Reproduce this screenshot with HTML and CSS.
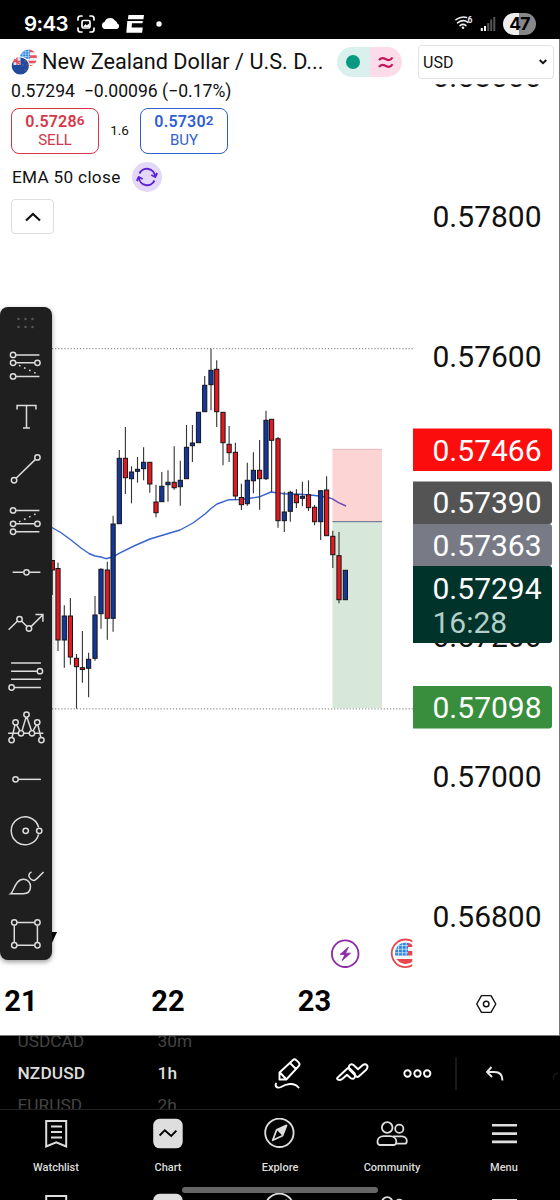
FILE: index.html
```html
<!DOCTYPE html>
<html lang="en">
<head>
  <meta charset="UTF-8">
  <meta name="viewport" content="width=device-width, initial-scale=1.0">
  <title>NZDUSD Chart</title>
  <link rel="stylesheet" href="styles.css">
</head>
<body>
  <!-- Shared icons -->
  <svg class="defs" width="0" height="0">
    <symbol id="iconWatchlist" viewBox="0 0 32 32">
      <path d="M6.2 2.9h20v25.6l-10-4.2-10 4.2z" fill="none" stroke="#dedede" stroke-width="2"/>
      <path d="M11 8.6h11M11 14h11M11 19.5h11" stroke="#dedede" stroke-width="2"/>
    </symbol>
    <symbol id="iconChart" viewBox="0 0 32 32">
      <rect x="1.2" y="0.8" width="29.500" height="29.500" rx="6.5" fill="#dedede"/>
      <path d="M7.600 17.500l5.200-5.300 6.400 5.800 5.200-5.400" fill="none" stroke="#000" stroke-width="1.9"/>
    </symbol>
    <symbol id="iconExplore" viewBox="0 0 32 32">
      <circle cx="15.4" cy="14.800" r="14.2" fill="none" stroke="#dedede" stroke-width="1.8"/>
      <path d="M22.5 7.4l-4 10.4-9.8 4.4 4-10.4z" fill="none" stroke="#dedede" stroke-width="1.8" stroke-linejoin="round"/>
      <path d="M22.5 7.4l-4 10.4-5.8-6z" fill="#dedede"/>
    </symbol>
    <symbol id="iconCommunity" viewBox="0 0 32 32">
      <g fill="none" stroke="#dedede" stroke-width="1.8" stroke-linejoin="round">
        <circle cx="11.2" cy="9.500" r="5.3"/>
        <circle cx="23.3" cy="10.8" r="4.1"/>
        <path d="M1.500 23.600c0-3.300 2.800-5.400 6.300-5.400h6.200c3.500 0 6.300 2.100 6.300 5.400 0 2-.8 3.400-2.300 3.400H3.800c-1.500 0-2.300-1.300-2.300-3.400z"/>
        <path d="M17 18.300h8.300c3 0 5.500 1.700 5.500 4.400 0 1.900-.7 3-2 3h-8.500"/>
      </g>
    </symbol>
    <symbol id="iconMenu" viewBox="0 0 32 32">
      <path d="M4 7.300h25M4 15.600h25M4 23.900h25" stroke="#dedede" stroke-width="2.600"/>
    </symbol>
    <symbol id="flagUs" viewBox="0 0 24 24">
      <clipPath id="usClip"><circle cx="12" cy="12" r="12"/></clipPath>
      <g clip-path="url(#usClip)">
        <path fill="#f4f4f6" d="M0 0h24v24H0z"/>
        <path fill="#e8565b" d="M12 0h12v4H12zM12 8h12v4H12zM0 16h24v3.500H0zM0 22h24v2H0z"/>
        <path fill="#2f86de" d="M0 0h14v13H0z"/>
        <path d="M4 0v13M8 0v13M12 0v13M0 3h14M0 6.500h14M0 10h14" stroke="#bfe0fa" stroke-width=".9"/>
      </g>
    </symbol>
    <symbol id="flagUsBig" viewBox="0 0 24 24">
      <clipPath id="usBigClip"><circle cx="12" cy="12" r="12"/></clipPath>
      <g clip-path="url(#usBigClip)">
        <path fill="#f7f7f9" d="M0 0h24v24H0z"/>
        <path fill="#e8464c" d="M14 0h10v5H14zM14 9.500h10v5H14zM0 18.500h24V24H0z"/>
        <path fill="#2b83dd" d="M0 0h14.500v14.500H0z"/>
        <path d="M4 0v14.500M8.200 0v14.500M12.400 0v14.500M0 3.500h14.500M0 7.500h14.500M0 11.500h14.500" stroke="#d5eafc" stroke-width=".9"/>
      </g>
    </symbol>
  </svg>

  <div class="phone">
    <header class="status-bar">
      <span class="clock">9:43</span>
      <svg class="status-left" width="92" height="22" viewBox="76 13 92 22">
        <g fill="none" stroke="#fff" stroke-width="1.700" stroke-linecap="round">
          <path d="M78 20v-1.500q0-2.500 2.500-2.500H82M90 16h1.500q2.500 0 2.500 2.500V20M94 28v1.500q0 2.500-2.500 2.500H90M82 32h-1.500q-2.500 0-2.500-2.500V28"/>
          <rect x="82" y="20.500" width="8" height="7.500" rx="1.500"/>
        </g>
        <path d="M83 27l2.500-3 1.500 1.500 1.500-2 1.500 3.500z" fill="#fff"/>
        <path d="M105 29a3.600 3.600 0 0 1-.5-7 6 6 0 0 1 10.500-1.500 4.500 4.500 0 0 1 2.300 3 2.900 2.900 0 0 1-.3 5.500z" fill="#fff"/>
        <path d="M128.500 15h15.500l-.6 4.300h-15.500zM127.300 21h4.900l-.6 6.500h11.200l-.7 5.300h-15.800zM132 21h10.800l-.3 2.300H132z" fill="#fff"/>
        <circle cx="159" cy="24" r="2.700" fill="#fff"/>
      </svg>
      <svg class="status-right" width="44" height="20" viewBox="454 14 44 20">
        <g fill="none" stroke="#eee" stroke-width="1.600" stroke-linecap="round">
          <path d="M456 19.700q5.500-4 10.500-2.200M457.500 22.800q5.500-4 10.500-.5M460 25.600q3-2.400 6 0"/>
        </g>
        <circle cx="463" cy="27.700" r="1.300" fill="#eee"/>
        <text x="467.500" y="22.500" class="wifi-gen">6</text>
        <path d="M481.800 31v-3M485 31v-5" stroke="#fff" stroke-width="2"/>
        <path d="M488.200 31v-8M491.200 31V19.500M494.300 31V17" stroke="#555" stroke-width="2"/>
      </svg>
      <span class="battery">47</span>
    </header>

    <main class="chart">
      <svg class="plot" width="560" height="997" viewBox="0 39 560 997">
        <rect x="332.500" y="449" width="49.500" height="72.500" fill="#fcd4d3"/>
        <rect x="332.500" y="521.500" width="49.500" height="186.500" fill="#d7e7d9"/>
        <path d="M332.500 449.300H382" stroke="#e3b5b4" stroke-width=".8"/>
        <path d="M332.500 521.600H382" stroke="#77809a" stroke-width="1.200"/>
        <path d="M52 348.700H413M52 708.900H413" stroke="#777" stroke-width="1" stroke-dasharray="1.200 1.900"/>
        <path id="ema" d="" fill="none" stroke="#3564cf" stroke-width="1.400" stroke-linejoin="round"/>
        <g id="candles"></g>
        <path d="M332 498.700l6.500 4 7.500 3.300" fill="none" stroke="#6f45b5" stroke-width="1.400"/>
        <path d="M50 932h7l-6 13z" fill="#000"/>

        <!-- Event markers -->
        <circle cx="345.200" cy="953.700" r="13.300" fill="#fff" stroke="#8d2aa6" stroke-width="1.800"/>
        <path d="M348.500 947l-8.500 7.500h5l-3 6.200 8.500-7.500h-5z" fill="#8d2aa6" stroke="#8d2aa6" stroke-width=".8" stroke-linejoin="round"/>
        <svg x="380" y="930" width="32.300" height="46" viewBox="380 930 32.300 46">
          <circle cx="405.500" cy="953.300" r="13.800" fill="#fff" stroke="#e5484f" stroke-width="1.800"/>
          <use href="#flagUsBig" x="395" y="942.500" width="21.500" height="21.500"/>
        </svg>

        <!-- Price axis -->
        <g class="ticks">
          <text x="432.500" y="86.500">0.58000</text>
          <text x="432.500" y="226.700">0.57800</text>
          <text x="432.500" y="366.700">0.57600</text>
          <text x="432.500" y="646.700">0.57200</text>
          <text x="432.500" y="786.700">0.57000</text>
          <text x="432.500" y="926.700">0.56800</text>
        </g>
        <path d="M414 60h140v24.300H414z" fill="#fff"/>
        <g class="tags">
          <path d="M413 428.500h136q3 0 3 3v36.500q0 3-3 3H413z" fill="#fb0d0e"/>
          <path d="M413 481.500h136q3 0 3 3v36.500q0 3-3 3H413z" fill="#545454"/>
          <path d="M413 524h136q3 0 3 3v36q0 3-3 3H413z" fill="#787b86"/>
          <path d="M413 566h136q3 0 3 3v71q0 3-3 3H413z" fill="#00332a"/>
          <path d="M413 686h136q3 0 3 3v36.500q0 3-3 3H413z" fill="#388e3c"/>
          <text x="432.500" y="460.700">0.57466</text>
          <text x="432.500" y="513.300">0.57390</text>
          <text x="432.500" y="555.700">0.57363</text>
          <text x="432.500" y="598.500">0.57294</text>
          <text x="432.500" y="633.200" class="countdown">16:28</text>
          <text x="432.500" y="717.800">0.57098</text>
        </g>

        <!-- Time axis -->
        <g class="days">
          <text x="21" y="1010.500">21</text>
          <text x="168" y="1010.500">22</text>
          <text x="314.500" y="1010.500">23</text>
        </g>
        <path d="M481.500 995.600h9.500l4.800 8.400-4.800 8.400h-9.500l-4.800-8.400z" fill="none" stroke="#111" stroke-width="1.400" stroke-linejoin="round"/>
        <circle cx="486.200" cy="1004" r="2.800" fill="none" stroke="#111" stroke-width="1.400"/>
        <path d="M559.500 39v997" stroke="#777" stroke-width="1"/>
      </svg>

      <section class="legend">
        <div class="symbol-row">
          <svg class="pair" width="26" height="26" viewBox="0 0 26 26">
            <use href="#flagUs" x="9" y="0.500" width="17" height="17"/>
            <circle cx="9.300" cy="17" r="9.500" fill="#fff"/>
            <circle cx="9.300" cy="17" r="8.600" fill="#1f4b9c"/>
            <path d="M2.500 12l4-3.600h3v7.500h-7z" fill="#dfe4f0"/>
            <path d="M6 8.500V16M2 12.500h7.500M3 10l6 5.500" stroke="#dd4b55" stroke-width="1.300"/>
            <path d="M13.500 12h1M11.500 16h1M15.500 16h1M13.500 21h1" stroke="#e05560" stroke-width="1.200"/>
          </svg>
          <h1>New Zealand Dollar / U.S. D...</h1>
          <div class="market">
            <span class="market-open"><i></i></span>
            <span class="market-delay">
              <svg width="18" height="14" viewBox="0 0 18 14">
                <path d="M2 5.200c2-3.200 4.500-2.400 7-1s4.700 1.300 6.500-1.700M2 12c2-3.200 4.500-2.400 7-1s4.700 1.300 6.500-1.700" fill="none" stroke="#c2185b" stroke-width="2.200"/>
              </svg>
            </span>
          </div>
        </div>
        <div class="change">0.57294&nbsp; −0.00096 (−0.17%)</div>
        <div class="trade">
          <button class="quote sell"><b>0.5728<span>6</span></b>SELL</button>
          <span class="spread">1.6</span>
          <button class="quote buy"><b>0.5730<span>2</span></b>BUY</button>
        </div>
        <div class="indicator">
          EMA 50 close
          <span class="refresh">
            <svg width="22" height="22" viewBox="0 0 22 22">
              <g fill="none" stroke="#5b22d6" stroke-width="1.900">
                <path d="M3.500 7.500a8.200 8.200 0 0 1 15.600 3M18.500 14.500a8.200 8.200 0 0 1-15.600-3"/>
                <path d="M15.300 9l4 2 1.800-4M6.700 13l-4-2-1.800 4"/>
              </g>
            </svg>
          </span>
        </div>
        <button class="collapse">
          <svg width="18" height="10" viewBox="0 0 18 10"><path d="M2 8.500l7-6.500 7 6.500" fill="none" stroke="#111" stroke-width="2.200"/></svg>
        </button>
      </section>

      <div class="currency">
        USD
        <svg width="8" height="6" viewBox="0 0 8 6"><path d="M.7 1l3.300 3.200L7.300 1" fill="none" stroke="#111" stroke-width="1.800"/></svg>
      </div>

      <!-- Drawing tools -->
      <aside class="tools">
        <svg class="grip" viewBox="0 0 52 24">
          <g fill="#555"><circle cx="18.500" cy="8" r="1.300"/><circle cx="25.500" cy="8" r="1.300"/><circle cx="32.500" cy="8" r="1.300"/><circle cx="18.500" cy="16" r="1.300"/><circle cx="25.500" cy="16" r="1.300"/><circle cx="32.500" cy="16" r="1.300"/></g>
        </svg>
        <svg class="tool" viewBox="0 0 52 52">
          <path d="M16 15h23.500M16 23h18.500M16 36.600h23.500"/><path class="dots" d="M19 25.500l19 9"/>
          <circle cx="13" cy="15" r="2.700"/><circle cx="13" cy="23" r="2.700"/><circle cx="37.500" cy="23" r="2.700"/><circle cx="13" cy="36.600" r="2.700"/>
        </svg>
        <svg class="tool" viewBox="0 0 52 52"><path d="M17 18.500v-4h19v4M26.500 14.500v23M23 37.300h7"/></svg>
        <svg class="tool" viewBox="0 0 52 52"><path d="M16 35.500l19.500-19"/><circle cx="14" cy="37.500" r="2.700"/><circle cx="37.500" cy="14.500" r="2.700"/></svg>
        <svg class="tool" viewBox="0 0 52 52">
          <path d="M16 15.500h23.500M16 29h18.500M16 37h23.500"/><path class="dots" d="M19 27l19-9"/>
          <circle cx="13" cy="15.500" r="2.700"/><circle cx="13" cy="29" r="2.700"/><circle cx="37.500" cy="29" r="2.700"/><circle cx="13" cy="37" r="2.700"/>
        </svg>
        <svg class="tool" viewBox="0 0 52 52"><path d="M12.500 26.500h11M29.500 26.500h11"/><circle cx="26.500" cy="26.500" r="2.700"/></svg>
        <svg class="tool" viewBox="0 0 52 52"><path d="M8.500 32l9-8.800M21.500 23.200l5.500 5.500M31 28.800l11.500-11.500M35.500 16.500h7.500v7.500"/><circle cx="19.500" cy="21.300" r="2.700"/><circle cx="29" cy="30.700" r="2.700"/></svg>
        <svg class="tool" viewBox="0 0 52 52"><path d="M11 13h30M11 21.300h26M11 29.500h30M14.500 37.700H41"/><circle cx="40" cy="21.300" r="2.700"/><circle cx="11.500" cy="37.700" r="2.700"/></svg>
        <svg class="tool" viewBox="0 0 52 52">
          <path d="M8 32.500h10M24 32.500h5M35 32.500h8.500M12 36.500l3-13M16.500 24l3.500 6M22 30l4-13.500M27 16.500l4.500 13.500M33 30l3.500-6M38 24l3 13"/>
          <circle cx="26.500" cy="13.700" r="2.700"/><circle cx="15.500" cy="21.500" r="2.700"/><circle cx="37.300" cy="21.500" r="2.700"/><circle cx="21" cy="32.500" r="2.700"/><circle cx="32" cy="32.500" r="2.700"/><circle cx="11.500" cy="39.300" r="2.700"/><circle cx="41.500" cy="39.300" r="2.700"/>
        </svg>
        <svg class="tool" viewBox="0 0 52 52"><path d="M18.500 26.500H41"/><circle cx="15.500" cy="26.500" r="2.700"/></svg>
        <svg class="tool" viewBox="0 0 52 52"><path d="M38.700 22.500a14 14 0 1 0 0 7"/><circle cx="25.700" cy="26" r="2.700"/><circle cx="39.300" cy="26" r="2.700"/></svg>
        <svg class="tool" viewBox="0 0 52 52"><path d="M10.500 38c3.500-2.500 4.500-14.500 13-14.500a7 7 0 0 1 7 7.500c0 4.500-3 7-7.500 7zM31.500 16c-3.500 2-3.300 5-.8 7.200s4.500 1.500 6-.2l7-7"/></svg>
        <svg class="tool" viewBox="0 0 52 52"><path d="M17 14.500h17.500M17 37.500h17.500M14.200 17.500v17M37.500 17.500v17"/><circle cx="14.200" cy="14.500" r="2.700"/><circle cx="37.500" cy="14.500" r="2.700"/><circle cx="14.200" cy="37.500" r="2.700"/><circle cx="37.500" cy="37.500" r="2.700"/></svg>
      </aside>
    </main>

    <section class="picker">
      <div class="wheel wheel-symbol"><span>USDCAD</span><b>NZDUSD</b><span>EURUSD</span></div>
      <div class="wheel wheel-interval"><span>30m</span><b>1h</b><span>2h</span></div>
      <svg class="actions" width="290" height="73" viewBox="270 1036 290 73">
        <g fill="none" stroke="#fff" stroke-width="1.900" stroke-linejoin="round" stroke-linecap="round">
          <path d="M279.500 1072.500l13.500-12.500q1.500-1.500 3.300.2l2.500 2.500q1.500 1.700 0 3.300l-12.500 13.500h-6.800zM290 1063l6 6M280 1072.500l6 6.500"/>
          <path d="M276 1083.500c-1.500 3.500 2 5 5 3.500 5-3 13-5 17.500.5"/>
          <path d="M338 1077.200l9-8.500q1.500-1.300 3 0l4.500 4.500q1.500 2.500 0 4.500t-4 .3l-3.500-3.300-4.500 4q-2.500 2-4.500 1t0-2.500z"/>
          <path d="M366.200 1069.800l-7.200 6.500q-1.500 1.300-3 0l-6.500-6.500q-1.500-2.500 0-4.500t4-.3l4.500 4.300 4.500-4q2.500-2 4.300-.3t-.6 4.800z"/>
          <circle cx="407.500" cy="1073.500" r="3.200"/><circle cx="417.500" cy="1073.500" r="3.200"/><circle cx="427.200" cy="1073.500" r="3.200"/>
          <path d="M491.500 1067l-4.500 5 5 5M487.500 1072h7q8 0 8 8.500" stroke="#e8e8e8" stroke-linecap="butt"/>
        </g>
        <path d="M456 1057v33" stroke="#222" stroke-width="1.500"/>
        <path d="M558 1073q-5 1-4.500 7" fill="none" stroke="#161616" stroke-width="1.500"/>
      </svg>
    </section>

    <nav class="tabs">
      <a><svg><use href="#iconWatchlist"/></svg>Watchlist</a>
      <a><svg><use href="#iconChart"/></svg>Chart</a>
      <a><svg><use href="#iconExplore"/></svg>Explore</a>
      <a><svg><use href="#iconCommunity"/></svg>Community</a>
      <a><svg><use href="#iconMenu"/></svg>Menu</a>
    </nav>
    <div class="tabs tabs-next">
      <a><svg><use href="#iconWatchlist"/></svg></a>
      <a><svg><use href="#iconChart"/></svg></a>
      <a><svg><use href="#iconExplore"/></svg></a>
      <a><svg><use href="#iconCommunity"/></svg></a>
      <a><svg><use href="#iconMenu"/></svg></a>
    </div>
    <div class="home-handle"></div>
  </div>

  <script>
    // x, high, body top, body bottom, low, up (1) or down (0)
    const candles = [
      [52.3, 560, 560.5, 570, 595, 0],
      [58, 562.5, 568.5, 640, 651, 0],
      [64.3, 605.3, 616, 640, 667.7, 1],
      [70.4, 598, 616, 657, 664.7, 0],
      [76.5, 654, 658.3, 666.7, 708.7, 0],
      [82.4, 631, 667.7, 669.5, 682.7, 0],
      [88.6, 652.7, 659.3, 668.3, 697.3, 1],
      [95, 596, 615, 658.3, 660.7, 1],
      [101, 568.3, 569.3, 613.7, 628.7, 1],
      [107.3, 561.7, 570, 618.3, 639.7, 0],
      [113.1, 515.7, 524, 618.3, 631.7, 1],
      [119.3, 450, 458.3, 523.7, 523.7, 1],
      [125.4, 427, 458.3, 477.7, 494, 0],
      [131.5, 466.3, 472, 478.7, 503.3, 1],
      [137.5, 457, 469.3, 471.3, 482.7, 1],
      [143.6, 447.3, 462.3, 468.7, 480.3, 1],
      [149.8, 462.3, 462.3, 484, 492.7, 0],
      [156, 484.7, 502, 512.7, 517.3, 0],
      [161.8, 472, 486.3, 501.7, 501.7, 1],
      [168, 470.3, 482.3, 484.7, 501.7, 1],
      [174.2, 446.3, 482.3, 487.7, 489.7, 0],
      [180.3, 460.7, 480.3, 486.7, 505.7, 1],
      [186.5, 425, 447.3, 478.7, 478.7, 1],
      [192.4, 425, 443, 445.7, 462, 1],
      [198.5, 412.3, 412.3, 442.7, 442.7, 1],
      [204.7, 376, 385.3, 411.7, 411.7, 1],
      [211, 348.7, 370.3, 384.7, 410.3, 1],
      [216.7, 360.3, 369.3, 411.7, 427, 0],
      [223, 412.3, 412.3, 442.7, 465.3, 0],
      [229.1, 426, 444.3, 452.7, 462, 0],
      [235.4, 442.7, 452.3, 496, 500, 0],
      [241.4, 483.7, 497.5, 504.7, 510, 0],
      [247.3, 462.7, 480.3, 503.7, 505.7, 1],
      [253.4, 452.3, 470.3, 480.8, 493.3, 1],
      [259.6, 440, 470.3, 478.7, 509.7, 0],
      [266, 410.7, 420.3, 478.7, 480, 1],
      [271.6, 419.3, 419.3, 440.3, 492, 0],
      [278, 437, 438.7, 520.7, 527.7, 0],
      [284.3, 491.7, 512, 520.7, 532, 1],
      [290.3, 490.7, 492.3, 511.3, 521.7, 1],
      [296.4, 489.3, 494.7, 502.7, 508, 0],
      [302.4, 481.7, 496.3, 498.3, 506.3, 1],
      [308.5, 480.3, 494.7, 507.7, 511, 0],
      [314.6, 505, 507.3, 521.7, 525.3, 0],
      [320.7, 490.7, 490.7, 521.7, 540, 1],
      [326.6, 476.3, 490, 535.7, 535.7, 0],
      [332.8, 530.7, 536.3, 554.7, 568, 0],
      [339, 532, 555.7, 599.7, 603.3, 0],
      [345.4, 570.3, 570.3, 599.7, 599.7, 1]
    ];

    const ema = [
      [50, 526.5], [60, 532], [71, 540], [81, 548], [89, 553.5], [95, 556], [101, 557], [106, 558.7],
      [113, 556.8], [120, 552.8], [135, 545.5], [150, 539], [165, 534.500], [180, 530], [193, 523], [205, 514],
      [211, 508.500], [217, 504], [229, 499.7], [241, 499.5], [250, 498.3], [260, 496.7], [271, 492],
      [284, 493.7], [300, 494.3], [315, 495.5], [326, 497], [332, 498.7]
    ];

    const svgNS = 'http://www.w3.org/2000/svg';
    const group = document.getElementById('candles');

    function add(name, attrs) {
      const el = document.createElementNS(svgNS, name);
      for (const key in attrs) el.setAttribute(key, attrs[key]);
      group.appendChild(el);
    }

    candles.forEach(([x, high, top, bottom, low, up]) => {
      add('path', { d: `M${x} ${high}V${low}`, class: 'wick' });
      add('rect', { x: x - 2.1, y: top, width: 4.2, height: bottom - top, class: up ? 'up' : 'down' });
    });

    document.getElementById('ema').setAttribute('d', 'M' + ema.map(p => p.join(' ')).join('L'));
  </script>
</body>
</html>
```
FILE: styles.css
```css
/* General */
* {
  box-sizing: border-box;
}

body {
  margin: 0;
  font-family: Roboto, sans-serif;
  background: #000;
  color: #111;
}

h1,
button {
  margin: 0;
  font: inherit;
}

.defs {
  position: absolute;
}

.phone {
  position: relative;
  width: 560px;
  height: 1200px;
  display: flex;
  flex-direction: column;
  overflow: hidden;
  background: #000;
}

/* Status bar */
.status-bar {
  flex: none;
  height: 39px;
  display: flex;
  align-items: center;
  padding: 8px 24px 0;
  color: #fff;
}

.clock {
  width: 52px;
  font-size: 20.5px;
  font-weight: 600;
  font-family: Inter, sans-serif;
  letter-spacing: -0.6px;
}

.status-right {
  margin-left: auto;
  margin-right: 5px;
}

.wifi-gen {
  font-size: 8.5px;
  font-weight: 700;
  fill: #eee;
}

.battery {
  width: 33px;
  height: 22px;
  border-radius: 11px;
  background: linear-gradient(90deg, #eee 47%, #888 47%);
  color: #000;
  font: 700 17.5px/22px Inter, sans-serif;
  letter-spacing: -0.8px;
  text-align: center;
}

/* Chart */
.chart {
  flex: none;
  position: relative;
  height: 997px;
  background: #fff;
  border-bottom: 1px solid #777;
}

.plot {
  display: block;
}

.wick {
  stroke: #333;
  stroke-width: 1.1;
}

.up,
.down {
  stroke: #15151c;
  stroke-width: 1;
}

.up {
  fill: #14379a;
}

.down {
  fill: #e5191d;
}

.ticks text,
.tags text {
  font-size: 30px;
}

.ticks text {
  fill: #111;
}

.tags text {
  fill: #fff;
}

.tags .countdown {
  fill: #b3cfc8;
}

.days text {
  font-size: 29px;
  font-weight: 700;
  text-anchor: middle;
}

/* Legend */
.legend {
  position: absolute;
  top: 0;
  left: 11px;
  width: 396px;
  display: flex;
  flex-direction: column;
  align-items: flex-start;
}

.symbol-row {
  display: flex;
  align-items: center;
  height: 42px;
  margin-top: 2px;
  width: 100%;
}

.symbol-row h1 {
  margin-left: 5px;
  width: 295px;
  font-size: 21.7px;
  line-height: 26px;
  padding-bottom: 1px;
  white-space: nowrap;
}

.market {
  display: flex;
  width: 65px;
  height: 30px;
  border-radius: 15px;
  overflow: hidden;
}

.market span {
  flex: 1;
  display: flex;
  align-items: center;
  justify-content: center;
}

.market-open {
  background: #daf0ec;
}

.market-open i {
  width: 14px;
  height: 14px;
  border-radius: 50%;
  background: #089981;
}

.market-delay {
  background: #fbdce8;
}

.change {
  height: 20px;
  line-height: 16px;
  font-size: 17.6px;
  white-space: nowrap;
}

.trade {
  display: flex;
  align-items: center;
  margin-top: 5px;
}

.quote {
  width: 88px;
  height: 46px;
  padding: 0 0 2px;
  border: 1.5px solid;
  border-radius: 8px;
  background: #fff;
  font-size: 15px;
  line-height: 18px;
}

.quote b {
  display: block;
  font-size: 16px;
  font-weight: 600;
  letter-spacing: 0.2px;
}

.quote b span {
  font-size: 13.5px;
  vertical-align: 2px;
}

.sell {
  color: #d63648;
}

.buy {
  color: #2f5fd0;
}

.spread {
  width: 41px;
  padding-bottom: 2px;
  text-align: center;
  font-size: 13.5px;
}

.indicator {
  display: flex;
  align-items: center;
  gap: 11px;
  margin-top: 8px;
  padding-left: 1px;
  font-size: 17.2px;
  letter-spacing: 0.3px;
}

.refresh {
  width: 30px;
  height: 30px;
  border-radius: 50%;
  background: #e4d8f9;
  display: flex;
  align-items: center;
  justify-content: center;
}

.collapse {
  width: 43px;
  height: 35px;
  margin-top: 7px;
  padding: 0;
  border: 1px solid #ddd;
  border-radius: 4px;
  background: #fff;
  display: flex;
  align-items: center;
  justify-content: center;
}

.currency {
  position: absolute;
  top: 6px;
  left: 418px;
  width: 136px;
  height: 34px;
  padding: 0 6px 0 4px;
  border: 1px solid #e2e2e2;
  border-radius: 4px;
  background: #fff;
  display: flex;
  align-items: center;
  justify-content: space-between;
  font-size: 16px;
}

/* Drawing toolbar */
.tools {
  position: absolute;
  top: 268px;
  left: 0;
  width: 52px;
  height: 653px;
  padding-top: 4px;
  border-radius: 8px;
  background: #1f1f1f;
  box-shadow: 0 2px 5px rgba(0, 0, 0, 0.4);
  display: flex;
  flex-direction: column;
}

.grip {
  width: 52px;
  height: 24px;
  margin-bottom: 4.5px;
}

.tool {
  width: 52px;
  height: 51.7px;
  fill: none;
  stroke: #dcdcdc;
  stroke-width: 1.5;
}

.tool .dots {
  stroke-dasharray: 1.6 4;
}

/* Symbol and interval picker */
.picker {
  flex: none;
  height: 74px;
  display: flex;
  border-bottom: 1px solid #222;
  overflow: hidden;
}

.wheel {
  width: 140px;
  padding-left: 17.5px;
  display: flex;
  flex-direction: column;
  justify-content: center;
  font-size: 17.3px;
  line-height: 32px;
  color: #444;
}

.wheel b {
  font-weight: 500;
  letter-spacing: 0.1px;
  color: #ddd;
}

.wheel-interval {
  width: 130px;
}

/* Tabs */
.tabs {
  flex: none;
  height: 75px;
  display: flex;
  padding-top: 8px;
}

.tabs a {
  width: 112px;
  display: flex;
  flex-direction: column;
  align-items: center;
  gap: 11px;
  color: #ddd;
  font-size: 11px;
  line-height: 14px;
  font-weight: 500;
}

.tabs svg {
  width: 32px;
  height: 32px;
}

.home-handle {
  position: absolute;
  left: 182px;
  top: 1187px;
  width: 196px;
  height: 6px;
  border-radius: 3px;
  background: #666;
}
```
